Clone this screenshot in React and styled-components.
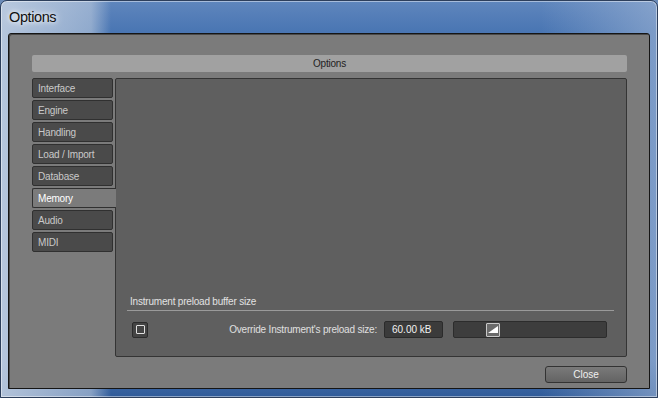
import styled, { createGlobalStyle } from "styled-components"

const Global = createGlobalStyle`
  html, body { margin:0; padding:0; background:#6b8bb8; }
  body { width:658px; height:398px; overflow:hidden; }
`

const tabs = ["Interface", "Engine", "Handling", "Load / Import", "Database", "Memory", "Audio", "MIDI"]

export default function App() {
  return (
    <>
      <Global />
      <Window>
        <TitleBar>Options</TitleBar>
        <Client>
          <Header>Options</Header>
          <Body>
            <TabList>
              {tabs.map(t => (
                <Tab key={t} $active={t === "Memory"}>{t}</Tab>
              ))}
            </TabList>
            <Panel>
              <SectionTitle>Instrument preload buffer size</SectionTitle>
              <Row>
                <Check><span /></Check>
                <Spacer />
                <Label>Override Instrument's preload size:</Label>
                <Value>60.00 kB</Value>
                <Slider>
                  <Thumb>
                    <svg width="10" height="7" viewBox="0 0 10 7">
                      <polygon points="0,7 10,7 10,0" fill="#fff" />
                    </svg>
                  </Thumb>
                </Slider>
              </Row>
            </Panel>
          </Body>
          <Footer>
            <Button>Close</Button>
          </Footer>
        </Client>
      </Window>
    </>
  )
}

const Window = styled.div`
  box-sizing:border-box;
  width:658px;
  height:398px;
  display:flex;
  flex-direction:column;
  padding:0 7px 8px 7px;
  border:1px solid #2d3f5c;
  border-radius:7px 7px 0 0;
  background:
    linear-gradient(90deg, rgba(200,212,228,0.85) 0px, rgba(190,204,222,0.6) 90px, rgba(70,110,170,0) 110px, rgba(70,110,170,0) 540px, rgba(160,182,214,0.6) 658px),
    linear-gradient(180deg, #5f86bd 0px, #4a76b3 30px, #4d78b4 360px, #2f5a98 398px);
  box-shadow:inset 0 0 0 1px rgba(255,255,255,0.45);
`

const TitleBar = styled.div`
  height:33px;
  display:flex;
  align-items:center;
  padding-left:1px;
  font-family:"Liberation Sans", Arial, sans-serif;
  font-size:14.5px;
  letter-spacing:-0.4px;
  color:#111;
  text-shadow:0 0 8px rgba(255,255,255,0.9), 0 0 4px rgba(255,255,255,0.9);
`

const Client = styled.div`
  flex:1;
  display:flex;
  flex-direction:column;
  border:1px solid #151515;
  border-radius:3px 3px 0 0;
  background:#7b7b7b;
  padding:21px 22px 5px 23px;
  box-shadow:inset 1px 1px 0 #4a4a4a;
  font-family:"Liberation Sans", Arial, sans-serif;
  font-size:10px;
  letter-spacing:-0.2px;
`

const Header = styled.div`
  height:17px;
  display:flex;
  align-items:center;
  justify-content:center;
  background:#a1a1a1;
  border-radius:2px;
  color:#1e1e1e;
`

const Body = styled.div`
  display:flex;
  gap:2px;
  margin-top:6px;
  height:279px;
`

const TabList = styled.div`
  width:81px;
  display:flex;
  flex-direction:column;
  gap:2px;
`

const Tab = styled.div`
  box-sizing:border-box;
  height:20px;
  display:flex;
  align-items:center;
  padding-left:5px;
  border:1px solid #303030;
  border-radius:2px;
  background:${p => (p.$active ? "#7b7b7b" : "#4a4a4a")};
  color:${p => (p.$active ? "#ffffff" : "#c9c9c9")};
  ${p => p.$active && "margin-right:-3px; border-right:none; border-radius:2px 0 0 2px; position:relative; z-index:1;"}
`

const Panel = styled.div`
  flex:1;
  box-sizing:border-box;
  display:flex;
  flex-direction:column;
  justify-content:flex-end;
  background:#5f5f5f;
  border:1px solid #343434;
  border-radius:2px;
  padding:0 12px 18px 11px;
`

const SectionTitle = styled.div`
  padding:0 0 3px 3px;
  border-bottom:1px solid #9a9a9a;
  color:#e2e2e2;
`

const Row = styled.div`
  display:flex;
  align-items:center;
  margin-top:10px;
  padding:0 7px 0 5px;
  height:17px;
`

const Check = styled.div`
  box-sizing:border-box;
  width:16px;
  height:16px;
  border:1px solid #2c2c2c;
  border-radius:2px;
  background:#444;
  display:flex;
  align-items:center;
  justify-content:center;
  span {
    width:9px;
    height:9px;
    border:1px solid #e0e0e0;
    box-sizing:border-box;
    border-radius:1px;
  }
`

const Spacer = styled.div`
  flex:1;
`

const Label = styled.div`
  color:#e0e0e0;
  margin-right:7px;
`

const Value = styled.div`
  box-sizing:border-box;
  width:59px;
  height:17px;
  display:flex;
  align-items:center;
  padding-left:7px;
  background:#3b3b3b;
  border:1px solid #2b2b2b;
  border-radius:2px;
  color:#f2f2f2;
  margin-right:10px;
  letter-spacing:0;
`

const Slider = styled.div`
  box-sizing:border-box;
  width:154px;
  height:17px;
  display:flex;
  align-items:center;
  padding-left:32px;
  background:#3d3d3d;
  border:1px solid #2c2c2c;
  border-radius:2px;
`

const Thumb = styled.div`
  box-sizing:border-box;
  width:14px;
  height:14px;
  display:flex;
  align-items:center;
  justify-content:center;
  background:#6a6a6a;
  border:1px solid #c8c8c8;
  border-radius:1px;
`

const Footer = styled.div`
  display:flex;
  justify-content:flex-end;
  margin-top:9px;
`

const Button = styled.div`
  box-sizing:border-box;
  width:82px;
  height:17px;
  display:flex;
  align-items:center;
  justify-content:center;
  background:linear-gradient(180deg, #7a7a7a, #636363);
  border:1px solid #333;
  border-radius:3px;
  color:#f0f0f0;
  letter-spacing:0;
`
